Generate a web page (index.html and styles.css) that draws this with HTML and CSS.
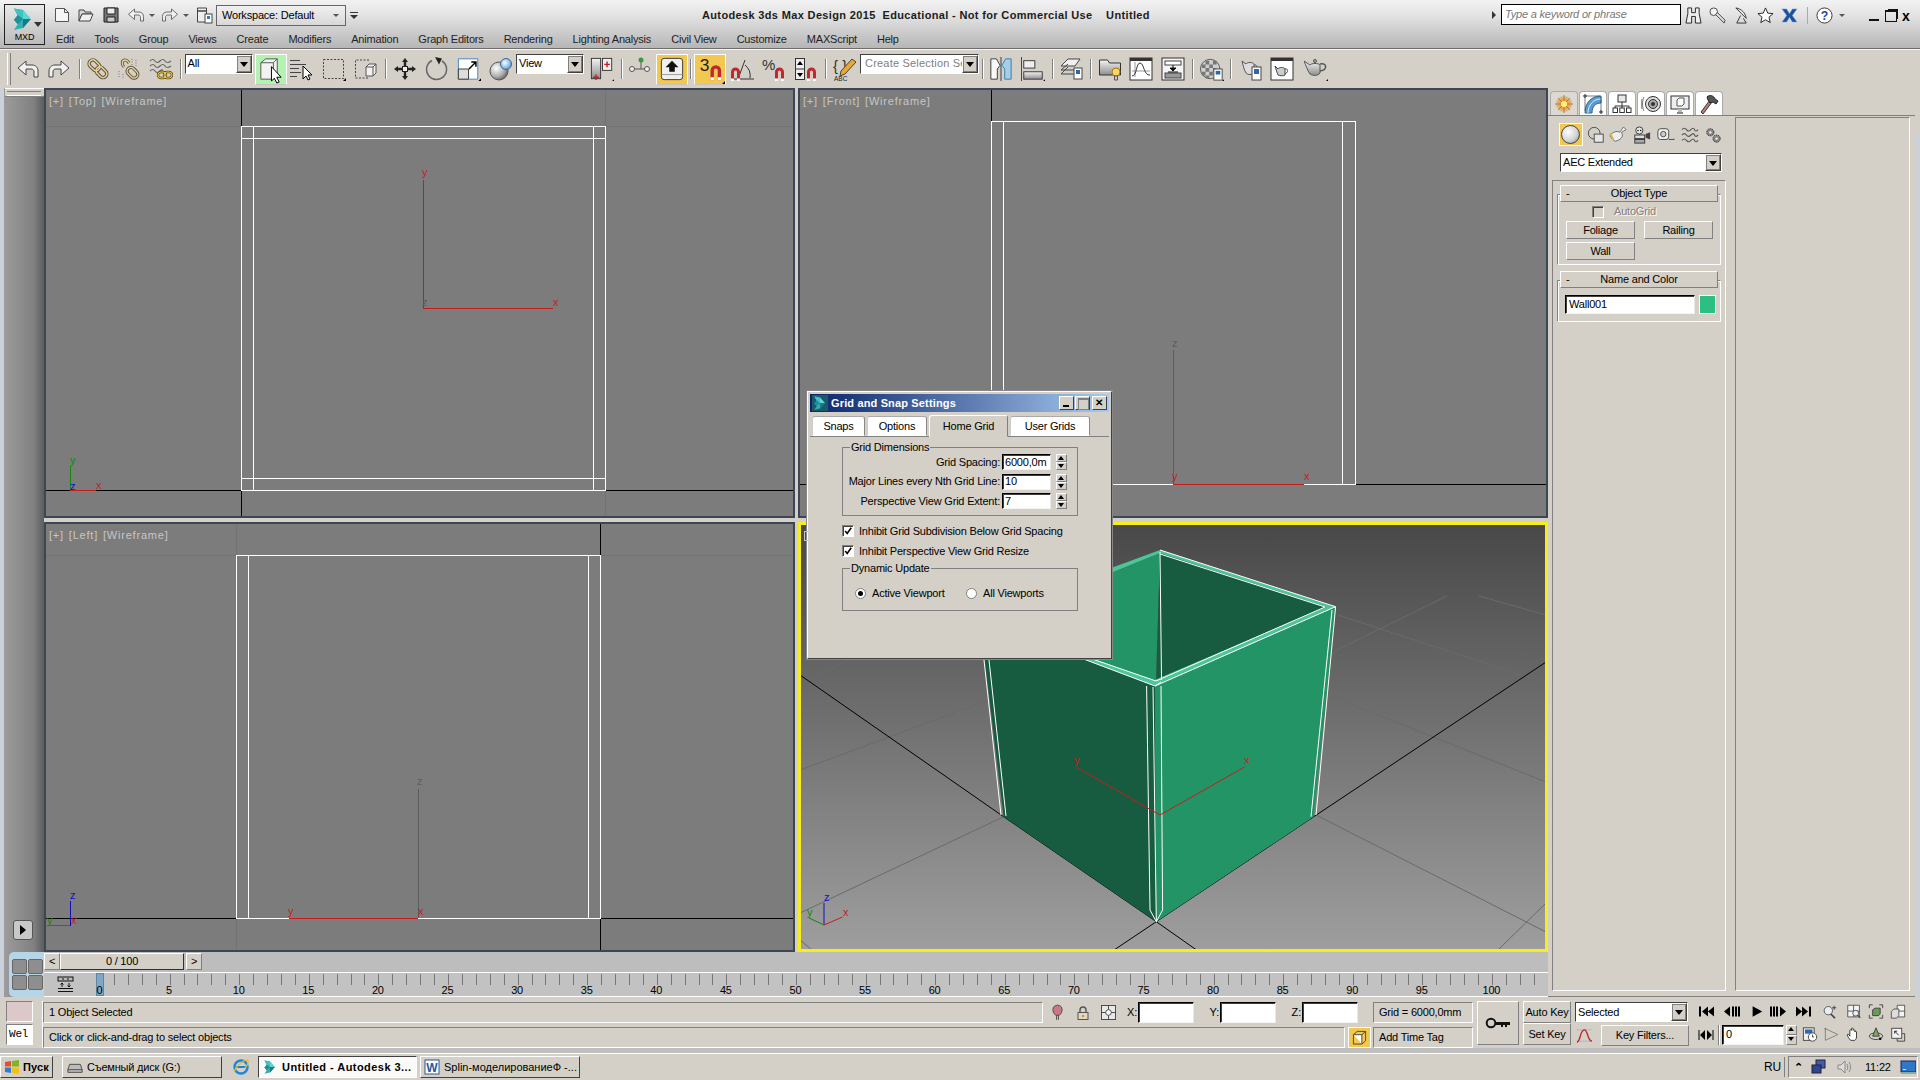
FILE: index.html
```html
<!DOCTYPE html>
<html lang="en">
<head>
    <meta charset="UTF-8">
    <title>Autodesk 3ds Max Design 2015</title>
    <link rel="stylesheet" href="styles.css">
</head>
<body>
<!-- shared icons -->
<svg class="defs" width="0" height="0">
    <defs>
        <linearGradient id="g-grey" x1="0" y1="0" x2="0" y2="1"><stop offset="0" stop-color="#f4f4f4"/><stop offset="1" stop-color="#8d8d8d"/></linearGradient>
        <radialGradient id="g-ball" cx=".35" cy=".35" r=".75"><stop offset="0" stop-color="#fff"/><stop offset=".6" stop-color="#b0b0b0"/><stop offset="1" stop-color="#555"/></radialGradient>
        <radialGradient id="g-blue" cx=".4" cy=".4" r=".7"><stop offset="0" stop-color="#fff"/><stop offset="1" stop-color="#4d8fd0"/></radialGradient>
        <radialGradient id="g-sun" cx=".5" cy=".5" r=".5"><stop offset="0" stop-color="#fff6a0"/><stop offset=".5" stop-color="#f0a030"/><stop offset="1" stop-color="#d0c0a8"/></radialGradient>
    </defs>
    <symbol id="i-new" viewBox="0 0 16 16"><path d="M1.500 1.500h9l4 4v9h-13z" fill="#f6f6f6" stroke="#555"/><path d="M10.500 1.500v4h4" fill="none" stroke="#555"/></symbol>
    <symbol id="i-open" viewBox="0 0 16 16"><path d="M1 3h5l1 2h6v2H4L1 14z" fill="#d8d8d8" stroke="#444"/><path d="M4 7h11l-3 7H1z" fill="#f0f0f0" stroke="#444"/></symbol>
    <symbol id="i-save" viewBox="0 0 16 16"><path d="M1 1h14v14H1z" fill="#777" stroke="#222"/><path d="M4 1h8v6H4z" fill="#eee" stroke="#222"/><path d="M4 10h8v5H4z" fill="#ccc" stroke="#222"/></symbol>
    <symbol id="i-undo" viewBox="0 0 24 24"><path d="M2 11l8-7v4h6c4 0 6 3 6 6v6h-4v-5c0-2-1-3-3-3h-5v6z" fill="#f0f0f0" stroke="#444"/></symbol>
    <symbol id="i-redo" viewBox="0 0 24 24"><path d="M22 11l-8-7v4H8c-4 0-6 3-6 6v6h4v-5c0-2 1-3 3-3h5v6z" fill="#f0f0f0" stroke="#444"/></symbol>
    <symbol id="i-project" viewBox="0 0 18 18"><path d="M1.500 2h9v3h-9zM1.500 5h9v11h-9z" fill="#eee" stroke="#444"/><rect x="9" y="8" width="7" height="9" fill="#fff" stroke="#444"/><rect x="11" y="10" width="3" height="3" fill="#3f78b8"/></symbol>
    <symbol id="i-link" viewBox="0 0 24 24"><g fill="none"><g stroke="#5a4f38" stroke-width="3.400"><rect x="2.500" y="4.500" width="12" height="7.500" rx="3.700" transform="rotate(45 8.500 8.200)"/><rect x="9.500" y="11.500" width="12" height="7.500" rx="3.700" transform="rotate(45 15.500 15.200)"/></g><g stroke="#e8d49a" stroke-width="1.600"><rect x="2.500" y="4.500" width="12" height="7.500" rx="3.700" transform="rotate(45 8.500 8.200)"/><rect x="9.500" y="11.500" width="12" height="7.500" rx="3.700" transform="rotate(45 15.500 15.200)"/></g></g></symbol>
    <symbol id="i-unlink" viewBox="0 0 24 24"><g fill="none"><path d="M7 10C4 7 5 3 8 3s3 2 4 3" stroke="#5a4f38" stroke-width="3"/><path d="M7 10C4 7 5 3 8 3s3 2 4 3" stroke="#e8d49a" stroke-width="1.300"/><rect x="9.500" y="12" width="12" height="7.500" rx="3.700" transform="rotate(45 15.500 15.700)" stroke="#5a4f38" stroke-width="3.200"/><rect x="9.500" y="12" width="12" height="7.500" rx="3.700" transform="rotate(45 15.500 15.700)" stroke="#e8d49a" stroke-width="1.400"/><path d="M15 2v7M19 3v7M2 14v7M6 17v5" stroke="#777" stroke-dasharray="1 1.500"/></g></symbol>
    <symbol id="i-bind" viewBox="0 0 24 24"><path d="M1 4q3-3 5 0t5 0 5 0 6 0M1 9q3-3 5 0t5 0 5 0 6 0M1 14q3-3 5 0t5 0 2 0" fill="none" stroke="#666" stroke-width="1.200"/><g fill="none"><rect x="9" y="15" width="8" height="6" rx="3" stroke="#655010" stroke-width="2.400"/><rect x="15" y="15" width="8" height="6" rx="3" stroke="#655010" stroke-width="2.400"/><rect x="9" y="15" width="8" height="6" rx="3" stroke="#e8c850"/><rect x="15" y="15" width="8" height="6" rx="3" stroke="#e8c850"/></g></symbol>
    <symbol id="i-select" viewBox="0 0 30 30"><path d="M5 8l5-4h12v17l-4 4H5z" fill="#f2f2f2" stroke="#555"/><path d="M5 8h13v17M18 8l4-4" fill="none" stroke="#555"/><path d="M16 12v15l3-3 2.500 5 2.500-1-2.500-5h4.500z" fill="#fff" stroke="#000"/></symbol>
    <symbol id="i-selname" viewBox="0 0 24 24"><path d="M0 3.500h10M0 7.500h16M0 11.500h9M0 15.500h11M0 19.500h7" stroke="#444" fill="none"/><path d="M13 9v13l3-3 2 4 2-1-2-4h4z" fill="#fff" stroke="#000"/></symbol>
    <symbol id="i-rect" viewBox="0 0 24 24"><rect x="1.500" y="2.500" width="20" height="19" fill="none" stroke="#444" stroke-dasharray="2 1.500"/><path d="M24 24h-3l3-3z"/></symbol>
    <symbol id="i-window" viewBox="0 0 24 24"><path d="M15 3H1.500v18H15" fill="none" stroke="#444" stroke-dasharray="2 1.500"/><path d="M12 10l3-3h7v9l-3 3h-7z" fill="#f2f2f2" stroke="#555"/><path d="M12 10h7v9M19 10l3-3" fill="none" stroke="#555"/></symbol>
    <symbol id="i-move" viewBox="0 0 24 24"><path d="M12 1l3 4H13.200v4h-2.400V5H9zM12 23l3-4H13.200v-4h-2.400v4H9zM1 12l4 3V13.200h4v-2.400H5V9zM23 12l-4 3V13.200h-4v-2.400h4V9z" fill="#222"/><rect x="9.500" y="9.500" width="5" height="5" fill="#eee" stroke="#222"/></symbol>
    <symbol id="i-rotate" viewBox="0 0 24 24"><path d="M8 3.500A10 10 0 1 0 18 4" fill="none" stroke="#666" stroke-width="1.500"/><path d="M11 0l7 1.500-3 6z" fill="#222"/></symbol>
    <symbol id="i-scale" viewBox="0 0 26 26"><path d="M1.500 2h21v22h-21z" fill="#fff" stroke="#3f80bd"/><path d="M1.500 13h11v11h-11z" fill="#ddd" stroke="#333"/><path d="M13 13l7-7M15.500 5.500h5v5" fill="none" stroke="#000" stroke-width="1.600"/><path d="M26 26h-3l3-3z"/></symbol>
    <symbol id="i-place" viewBox="0 0 24 24"><circle cx="10" cy="14" r="9" fill="url(#g-ball)" stroke="#555"/><circle cx="17" cy="7" r="5.500" fill="url(#g-blue)" stroke="#2f6aa8"/></symbol>
    <symbol id="i-pivot" viewBox="0 0 26 26"><rect x="1.500" y="1.500" width="10" height="22" fill="url(#g-grey)" stroke="#333"/><rect x="13.500" y="1.500" width="10" height="13" fill="#eee" stroke="#333"/><path d="M6.500 19v6M3.500 22h6M18.500 5v6M15.500 8h6" stroke="#d01818" stroke-width="1.500"/><path d="M26 26h-2l2-2z"/></symbol>
    <symbol id="i-manip" viewBox="0 0 24 24"><path d="M13 3v9M6 12h11" stroke="#555" fill="none"/><circle cx="13" cy="3" r="2.500" fill="#3b9a3b"/><circle cx="4" cy="12" r="2.500" fill="#eee" stroke="#555"/><circle cx="19" cy="12" r="2.500" fill="#eee" stroke="#555"/></symbol>
    <symbol id="i-kbd" viewBox="0 0 26 26"><rect x="1.500" y="1.500" width="23" height="23" rx="3" fill="#f0f0f0" stroke="#333"/><path d="M1.500 19h23" stroke="#999"/><path d="M13 4l7 7h-4v5h-6v-5H6z" fill="#111"/></symbol>
    <symbol id="i-angle" viewBox="0 0 24 24"><path d="M4 22h20M8 22L15 3M15 8a14 14 0 0 1 5 13" fill="none" stroke="#333"/><path d="M1 24V15a4.500 4.500 0 0 1 9 0v9H7v-9a1.500 1.500 0 0 0-3 0v9z" fill="#c1272d"/><path d="M1 21.500h3V24H1zM7 21.500h3V24H7z" fill="#fff"/></symbol>
    <symbol id="i-spin" viewBox="0 0 24 24"><rect x="1.500" y="1.500" width="9" height="21" fill="#eee" stroke="#333"/><path d="M1.500 12h9" stroke="#333"/><path d="M6 4l3 4H3zM6 20l3-4H3z"/><path d="M13 24V15a4.500 4.500 0 0 1 9 0v9h-3v-9a1.500 1.500 0 0 0-3 0v9z" fill="#c1272d"/><path d="M13 21.500h3V24h-3zM19 21.500h3V24h-3z" fill="#fff"/></symbol>
    <symbol id="i-mirror" viewBox="0 0 26 26"><path d="M2 2h6l4 7-3 4v11H2z" fill="#fafafa" stroke="#333"/><path d="M13 0v26" stroke="#333"/><path d="M24 2h-6l-4 7 3 4v11h7z" fill="#a8cce4" stroke="#2e7cb0"/></symbol>
    <symbol id="i-align" viewBox="0 0 26 26"><path d="M.5 0v26" stroke="#333"/><rect x="3" y="4" width="12" height="8" fill="#eee" stroke="#333"/><rect x="3" y="16" width="20" height="8" fill="url(#g-grey)" stroke="#333"/><path d="M26 26h-2l2-2z"/></symbol>
    <symbol id="i-layers" viewBox="0 0 24 24"><path d="M1 9l7-7h12l-5 7zM1 13l7-6M1 17l7-7" fill="#f0f0f0" stroke="#444"/><path d="M1 13h14M1 17h14" stroke="#444"/><rect x="14" y="11" width="8" height="11" fill="#fff" stroke="#444"/><rect x="16" y="13" width="4" height="4" fill="#2f68a8"/></symbol>
    <symbol id="i-explorer" viewBox="0 0 24 24"><path d="M1.500 3h8l2 3h11v12H1.500z" fill="url(#g-grey)" stroke="#333"/><circle cx="18" cy="15" r="4" fill="#f8d860" stroke="#a07818"/><path d="M16.500 19h3v4h-3z" fill="#ccc" stroke="#555"/></symbol>
    <symbol id="i-curve" viewBox="0 0 24 24"><rect x="1" y="1" width="22" height="22" fill="#fff" stroke="#333"/><path d="M1 1h22v3H1z" fill="#333"/><path d="M6 5v15M3 14h18" stroke="#999"/><path d="M3 19c5 0 4-13 8-13s4 13 10 12" fill="none" stroke="#333"/></symbol>
    <symbol id="i-sched" viewBox="0 0 24 24"><rect x="1" y="1" width="22" height="22" fill="#f4f4f4" stroke="#333"/><rect x="4" y="4" width="16" height="4" fill="#fff" stroke="#444"/><rect x="4" y="16" width="16" height="5" fill="#999" stroke="#444"/><path d="M12 8v5M9 11h6l-3 3zM7 15h10" stroke="#111"/></symbol>
    <symbol id="i-mat" viewBox="0 0 26 26"><circle cx="11" cy="13" r="10.500" fill="#cfcfcf" stroke="#555"/><path d="M6 4h4v4H6zM14 4h4v4h-4zM2 8h4v4H2zM10 8h4v4h-4zM6 12h4v4H6zM14 12h4v4h-4zM2 16h4v4H2zM10 16h4v4h-4zM6 20h4v3H6z" fill="#777"/><rect x="15" y="13" width="9" height="12" fill="#fff" stroke="#444"/><rect x="17" y="15" width="5" height="4" fill="#2f68a8"/><path d="M26 26h-2l2-2z"/></symbol>
    <symbol id="i-rsetup" viewBox="0 0 24 24"><path d="M4 4l4 3c1-2 7-2 8 0v9c-2 2-6 2-8 0C6 13 5 8 4 4z" fill="#ddd" stroke="#555"/><path d="M16 8c3-1 4 3 0 5" fill="none" stroke="#555"/><rect x="14" y="10" width="9" height="13" fill="#fff" stroke="#444"/><rect x="16" y="12" width="5" height="5" fill="#2f68a8"/></symbol>
    <symbol id="i-frame" viewBox="0 0 24 24"><rect x="1" y="1" width="22" height="22" fill="#fff" stroke="#333"/><path d="M1 1h22v3H1z" fill="#333"/><path d="M5 9l3 3c1-2 6-2 7 0v6c-1 1-5 1-7 0-1-2-2-6-3-9z" fill="#ccc" stroke="#444"/><path d="M15 12c3-1 4 3 0 5" fill="none" stroke="#444"/></symbol>
    <symbol id="i-teapot" viewBox="0 0 24 24"><path d="M0 4l6 4c1-2 9-2 10 0v8c-2 3-7 3-10 1C3 13 2 8 0 4z" fill="url(#g-grey)" stroke="#555"/><path d="M16 7c7-2 8 6 0 7" fill="none" stroke="#555" stroke-width="1.500"/><circle cx="11" cy="4" r="1.500" fill="#aaa" stroke="#555"/><path d="M24 24h-2l2-2z"/></symbol>
    <symbol id="i-bino" viewBox="0 0 18 18"><path d="M3 1h4v5h4V1h4v6l2 10h-6V10H7v7H1l2-10z" fill="#eee" stroke="#222"/></symbol>
    <symbol id="i-key" viewBox="0 0 18 18"><circle cx="5" cy="5" r="4" fill="#f4f4f4" stroke="#444"/><path d="M7 8l9 9 1-3-8-8z" fill="#ddd" stroke="#444"/></symbol>
    <symbol id="i-dish" viewBox="0 0 18 18"><path d="M3 1c6 1 10 5 11 11z" fill="#eee" stroke="#333"/><path d="M8 9l-4 8h10l-3-5" fill="none" stroke="#333"/></symbol>
    <symbol id="i-star" viewBox="0 0 18 18"><path d="M9 1l2.400 5.500 5.600.5-4.300 3.800 1.300 5.700L9 13.500l-5 3 1.300-5.700L1 7l5.600-.5z" fill="#fff" stroke="#222"/></symbol>
    <symbol id="i-ax" viewBox="0 0 18 18"><path d="M1 2h5l3 5 3-5h5l-5 7 5 7h-5l-3-5-3 5H1l5-7z" fill="#1c4f9c" stroke="#8fb0dc" stroke-width=".6"/></symbol>
    <symbol id="i-create" viewBox="0 0 20 20"><circle cx="10" cy="10" r="8" fill="url(#g-sun)"/><path d="M10 1v18M1 10h18M4 4l12 12M16 4L4 16" stroke="#a86a3a" stroke-width=".8"/><circle cx="10" cy="10" r="3" fill="#fff080"/></symbol>
    <symbol id="i-modify" viewBox="0 0 20 20"><path d="M2 19C2 9 8 2 18 2v7C12 9 9 13 9 19z" fill="#5a9bd4" stroke="#2a6aa0"/><path d="M5 19C5 11 10 5 18 5" fill="none" stroke="#d8ecff"/><path d="M1 1h2v2H1zM17 17h2v2h-2z" fill="#fff" stroke="#222"/><path d="M2 3v14M3 2h14M18 3v14" stroke="#444" fill="none" stroke-width=".7"/></symbol>
    <symbol id="i-hier" viewBox="0 0 20 20"><rect x="6" y="1" width="8" height="7" fill="#e8e8e8" stroke="#333"/><path d="M10 8v4M3 12h14M3 12v2M10 12v2M17 12v2" stroke="#333" fill="none"/><rect x="1" y="14" width="4.500" height="4.500" fill="#fff" stroke="#333"/><rect x="7.800" y="14" width="4.500" height="4.500" fill="#fff" stroke="#333"/><rect x="14.500" y="14" width="4.500" height="4.500" fill="#fff" stroke="#333"/></symbol>
    <symbol id="i-motion" viewBox="0 0 20 20"><circle cx="12" cy="10" r="7.500" fill="#ddd" stroke="#333"/><circle cx="12" cy="10" r="4.500" fill="#aaa" stroke="#333"/><circle cx="12" cy="10" r="2" fill="#333"/><path d="M3 3c-2 4-2 10 0 14M1 5c-1 3-1 7 0 10" fill="none" stroke="#777"/></symbol>
    <symbol id="i-display" viewBox="0 0 20 20"><rect x="1" y="2" width="18" height="13" fill="#eee" stroke="#333"/><path d="M7 11V6l2-2h5v6l-2 2H7z" fill="#fff" stroke="#555"/><path d="M7 18h6v2H7z" fill="#888"/><path d="M8 15h4v3H8z" fill="#bbb"/></symbol>
    <symbol id="i-util" viewBox="0 0 20 20"><path d="M2 18L11 6l2 2L4 20z" fill="#b8807a" stroke="#333"/><path d="M8 3c3-3 7-1 8 2l3 2-2 3-3-2-3 1-2-3z" fill="#555" stroke="#222"/></symbol>
    <symbol id="i-shapes" viewBox="0 0 20 20"><circle cx="8" cy="8" r="6.500" fill="none" stroke="#444"/><rect x="8" y="9" width="10" height="9" fill="#e6e6e6" stroke="#444"/></symbol>
    <symbol id="i-lights" viewBox="0 0 20 20"><path d="M16 1l3 3-5 3 1 4c-1 3-4 5-8 6-2-1-4-3-6-6 2-3 5-5 8-5l3 1z" fill="#eee" stroke="#666"/><path d="M5 15L1 8" stroke="#dcb84c" stroke-width="2"/></symbol>
    <symbol id="i-cams" viewBox="0 0 20 20"><circle cx="7" cy="5" r="4" fill="#e6e6e6" stroke="#333"/><circle cx="5.500" cy="5" r=".8"/><circle cx="8.500" cy="5" r=".8"/><rect x="2" y="10" width="11" height="4" fill="#ddd" stroke="#333"/><rect x="2" y="15" width="11" height="4" fill="#aaa" stroke="#333"/><path d="M14 9l5-2v8l-5-2z" fill="#444"/></symbol>
    <symbol id="i-helpers" viewBox="0 0 20 20"><rect x="1" y="3" width="12" height="12" rx="3" fill="#eee" stroke="#444"/><circle cx="7" cy="9" r="3" fill="#ccc" stroke="#444"/><path d="M13 15h6v-1" fill="none" stroke="#444"/></symbol>
    <symbol id="i-warps" viewBox="0 0 20 20"><path d="M1 4q3-3 5 0t5 0 4 0 4 0M1 10q3-3 5 0t5 0 4 0 4 0M1 16q3-3 5 0t5 0 4 0 4 0" fill="none" stroke="#555" stroke-width="1.200"/></symbol>
    <symbol id="i-systems" viewBox="0 0 20 20"><g fill="#888" stroke="#222"><circle cx="7" cy="7" r="4" stroke-dasharray="1.500 1"/><circle cx="14" cy="14" r="4" stroke-dasharray="1.500 1"/></g><circle cx="7" cy="7" r="1.300" fill="#eee"/><circle cx="14" cy="14" r="1.300" fill="#eee"/></symbol>
    <symbol id="i-start" viewBox="0 0 16 16"><path d="M1 3l6-1v5.500H1z" fill="#e2502c"/><path d="M8 2l7-1v6.500H8z" fill="#7db428"/><path d="M1 8.500h6V14l-6-1z" fill="#2e7cd6"/><path d="M8 8.500h7V15l-7-1z" fill="#f5c013"/></symbol>
    <symbol id="i-drive" viewBox="0 0 18 18"><path d="M3 6h12l2 6v3H1v-3z" fill="#bbb" stroke="#444"/><path d="M1 12h16" stroke="#444"/></symbol>
    <symbol id="i-ie" viewBox="0 0 18 18"><circle cx="9" cy="9" r="6.500" fill="none" stroke="#1e88d8" stroke-width="2.500"/><path d="M4 9h10" stroke="#1e88d8" stroke-width="2"/><path d="M2 14C5 6 12 2 16 2c1 2-1 6-3 8" fill="none" stroke="#f0b828" stroke-width="1.200"/></symbol>
    <symbol id="i-max" viewBox="0 0 40 40"><path d="M6 4l14 2 12 14-12 14-14 3 6-9-6-7 6-6z" fill="#2fb0b4"/><path d="M20 6l12 14H20z" fill="#5fd6d2"/><path d="M20 20h12L20 34z" fill="#187a84"/><path d="M6 4l14 2v14l-8-6z" fill="#3cc4c4"/><path d="M12 14l8 6-8 8-6-7z" fill="#1f9098"/></symbol>
</svg>

<header class="titlebar">
    <div class="title-row">
        <div class="app-btn">
            <svg class="app-logo"><use href="#i-max"/></svg>
            <span class="app-arrow"></span>
            <span class="app-name">MXD</span>
        </div>
        <svg class="qa qa-new"><use href="#i-new"/></svg>
        <svg class="qa qa-open"><use href="#i-open"/></svg>
        <svg class="qa qa-save"><use href="#i-save"/></svg>
        <svg class="qa qa-undo"><use href="#i-undo"/></svg>
        <span class="tiny-arrow"></span>
        <svg class="qa qa-redo"><use href="#i-redo"/></svg>
        <span class="tiny-arrow"></span>
        <svg class="qa qa-proj"><use href="#i-project"/></svg>
        <div class="workspace">Workspace: Default<span class="tiny-arrow"></span></div>
        <span class="qa-more"></span>
        <div class="app-title">Autodesk 3ds Max Design 2015&nbsp; Educational - Not for Commercial Use &nbsp; &nbsp;Untitled</div>
        <span class="search-tri"></span>
        <div class="search">Type a keyword or phrase</div>
        <div class="info-icons">
            <svg><use href="#i-bino"/></svg>
            <svg><use href="#i-key"/></svg>
            <svg><use href="#i-dish"/></svg>
            <svg><use href="#i-star"/></svg>
            <svg><use href="#i-ax"/></svg>
        </div>
        <svg class="help-icon" viewBox="0 0 18 18"><circle cx="9" cy="9" r="8" fill="#fff" stroke="#333"/><text x="9" y="13.500" text-anchor="middle" class="svg-t" font-size="13" font-weight="700" fill="#2044b0">?</text></svg>
        <span class="tiny-arrow help-arrow"></span>
        <div class="win-btns">
            <span class="w-min"></span>
            <span class="w-max"></span>
            <span class="w-close">x</span>
        </div>
    </div>
    <nav class="menu">
        <span>Edit</span><span>Tools</span><span>Group</span><span>Views</span><span>Create</span><span>Modifiers</span><span>Animation</span><span>Graph Editors</span><span>Rendering</span><span>Lighting Analysis</span><span>Civil View</span><span>Customize</span><span>MAXScript</span><span>Help</span>
    </nav>
</header>

<div class="toolbar">
    <div class="tool"><span class="grip"></span></div>
    <div class="tool"><svg><use href="#i-undo"/></svg></div>
    <div class="tool"><svg><use href="#i-redo"/></svg></div>
    <div class="tool"><span class="sep"></span></div>
    <div class="tool"><svg><use href="#i-link"/></svg></div>
    <div class="tool"><svg><use href="#i-unlink"/></svg></div>
    <div class="tool"><svg><use href="#i-bind"/></svg></div>
    <div class="tool"><span class="sep"></span></div>
    <div class="tool tool-left"><div class="combo combo-tb"><span class="combo-val">All</span><span class="combo-btn"></span></div></div>
    <div class="tool tool-on-green"><svg class="big"><use href="#i-select"/></svg></div>
    <div class="tool"><svg><use href="#i-selname"/></svg></div>
    <div class="tool"><svg><use href="#i-rect"/></svg></div>
    <div class="tool"><svg><use href="#i-window"/></svg></div>
    <div class="tool"><span class="sep"></span></div>
    <div class="tool"><svg><use href="#i-move"/></svg></div>
    <div class="tool"><svg><use href="#i-rotate"/></svg></div>
    <div class="tool"><svg><use href="#i-scale"/></svg></div>
    <div class="tool"><svg><use href="#i-place"/></svg></div>
    <div class="tool tool-left"><div class="combo combo-tb"><span class="combo-val">View</span><span class="combo-btn"></span></div></div>
    <div class="tool"><svg><use href="#i-pivot"/></svg></div>
    <div class="tool"><span class="sep"></span></div>
    <div class="tool"><svg><use href="#i-manip"/></svg></div>
    <div class="tool tool-on"><svg><use href="#i-kbd"/></svg></div>
    <div class="tool"><span class="sep"></span></div>
    <div class="tool tool-on"><svg class="big" viewBox="0 0 30 30"><text x="4" y="17" class="svg-t" font-size="18" fill="#222">3</text><path d="M15 26V16a5.500 5.500 0 0 1 11 0v10h-3.500V16a2 2 0 0 0-4 0v10z" fill="#c1272d"/><path d="M15 23h3.500v3H15zM22.500 23H26v3h-3.500z" fill="#fff"/><path d="M30 30h-3l3-3z"/></svg></div>
    <div class="tool"><svg><use href="#i-angle"/></svg></div>
    <div class="tool"><svg viewBox="0 0 24 24"><text x="0" y="13" class="svg-t" font-size="15" fill="#333">%</text><path d="M13 24V15a4.500 4.500 0 0 1 9 0v9h-3v-9a1.500 1.500 0 0 0-3 0v9z" fill="#c1272d"/><path d="M13 21.500h3V24h-3zM19 21.500h3V24h-3z" fill="#fff"/></svg></div>
    <div class="tool"><svg><use href="#i-spin"/></svg></div>
    <div class="tool"><span class="sep"></span></div>
    <div class="tool"><svg viewBox="0 0 24 24"><text x="0" y="14" class="svg-t" font-size="15" fill="#333">{ }</text><path d="M8 14L19 2l4 3-11 12-5 2z" fill="#e8a838" stroke="#444"/><text x="1" y="24" class="svg-t" font-size="6.500" fill="#222" letter-spacing=".6">ABC</text></svg></div>
    <div class="tool tool-left"><div class="combo combo-sel"><span class="combo-val combo-hint">Create Selection Se</span><span class="combo-btn"></span></div></div>
    <div class="tool"><span class="sep"></span></div>
    <div class="tool"><svg><use href="#i-mirror"/></svg></div>
    <div class="tool"><svg><use href="#i-align"/></svg></div>
    <div class="tool"><span class="sep"></span></div>
    <div class="tool"><svg><use href="#i-layers"/></svg></div>
    <div class="tool"><span class="sep"></span></div>
    <div class="tool"><svg><use href="#i-explorer"/></svg></div>
    <div class="tool"><svg><use href="#i-curve"/></svg></div>
    <div class="tool"><svg><use href="#i-sched"/></svg></div>
    <div class="tool"><span class="sep"></span></div>
    <div class="tool"><svg><use href="#i-mat"/></svg></div>
    <div class="tool"><span class="sep"></span></div>
    <div class="tool"><svg><use href="#i-rsetup"/></svg></div>
    <div class="tool"><svg><use href="#i-frame"/></svg></div>
    <div class="tool"><svg><use href="#i-teapot"/></svg></div>
</div>

<main class="workspace-area">
    <aside class="left-strip">
        <div class="strip-grip"></div>
        <div class="strip-play"><span></span></div>
        <div class="layout-btn"><i></i><i></i><i></i><i></i></div>
    </aside>

    <section class="center">
        <div class="viewports">
            <div class="vp">
                <span class="vp-label">[+] [Top] [Wireframe]</span>
                <svg class="vp-svg" width="747" height="426" viewBox="46 90 747 426">
                    <path class="minor" d="M46 126.500h747M605.500 90v426"/>
                    <path class="major" d="M241.500 90v426M46 490.500h747"/>
                    <path class="wall" d="M241.500 126.500h364v364h-364zM253.500 126.500v364M593.500 126.500v364M241.500 138.500h364M241.500 478.500h364"/>
                    <path class="red" d="M423.500 180v128.500H553"/>
                    <text class="ax-red" x="422" y="176">y</text><text class="ax-red" x="553" y="306">x</text><text class="ax-grey" x="422" y="306">z</text>
                    <path class="green-l" d="M70.500 466v24"/><path class="red" d="M70 490.500h26"/>
                    <text class="ax-green" x="70" y="464">y</text><text class="ax-red" x="96" y="489">x</text><text class="ax-blue" x="70" y="490">z</text>
                </svg>
            </div>
            <div class="vp">
                <span class="vp-label">[+] [Front] [Wireframe]</span>
                <svg class="vp-svg" width="746" height="426" viewBox="800 90 746 426">
                    <path class="major" d="M991.500 90v426M800 484.500h746"/>
                    <path class="wall" d="M991.500 121.500h364v363h-364zM1003.500 121.500v363M1342.500 121.500v363"/>
                    <path class="red" d="M1173 484.500h131"/>
                    <path class="grey-l" d="M1173.500 350v134"/>
                    <text class="ax-red" x="1172" y="480">y</text><text class="ax-red" x="1304" y="480">x</text><text class="ax-grey" x="1172" y="347">z</text>
                </svg>
            </div>
            <div class="vp">
                <span class="vp-label">[+] [Left] [Wireframe]</span>
                <svg class="vp-svg" width="747" height="426" viewBox="46 524 747 426">
                    <path class="minor" d="M46 555.500h747M236.500 524v426"/>
                    <path class="major" d="M600.500 524v426M46 918.500h747"/>
                    <path class="wall" d="M236.500 555.500h364v363h-364zM248.500 555.500v363M588.500 555.500v363"/>
                    <path class="red" d="M289 918.500h129"/>
                    <path class="grey-l" d="M418.500 789v129"/>
                    <text class="ax-red" x="288" y="915">y</text><text class="ax-red" x="418" y="915">x</text><text class="ax-grey" x="417" y="785">z</text>
                    <path class="blue-l" d="M70.500 901v25"/><path class="green-l" d="M47 925.500h23"/>
                    <text class="ax-blue" x="70" y="899">z</text><text class="ax-green" x="47" y="924">y</text><text class="ax-red" x="71" y="924">x</text>
                </svg>
            </div>
            <div class="vp vp-active">
                <span class="vp-bracket"></span>
                <svg class="vp-svg" width="744" height="424" viewBox="801 525 744 424">
                    <defs>
                        <linearGradient id="g-persp" x1="0" y1="0" x2="0" y2="1"><stop offset="0" stop-color="#484848"/><stop offset="1" stop-color="#9e9e9e"/></linearGradient>
                    </defs>
                    <rect x="801" y="525" width="744" height="424" fill="url(#g-persp)"/>
                    <path class="minor-p" d="M1316 815L1546 932M1003 817L800 913M1447 596L1333 652M1479 596L1546 615M1338 615L1546 683M1328 695L1546 782M1546 903L1498 950M989 700L800 770M805 680L848 660M800 940L812 950"/>
                    <path class="black-p" d="M800 675L1003.600 816.700L1156.300 921.700L1313.800 816.700L1546.500 661.700M1156.300 921.700L1112.600 951M1156.300 921.700L1198 951"/>
                    <polygon class="face-light" points="1160,553 985,625 1156,682"/>
                    <polygon class="face-dark" points="1160,553 1326,607 1156,682"/>
                    <polygon class="face-dark" points="980,620 1155,686 1156.300,921.700 1003.600,816.700"/>
                    <polygon class="face-light" points="1155,686 1335.600,607 1313.800,816.700 1156.300,921.700"/>
                    <polygon class="face-rim" points="1160,550 1335.600,606.700 1155,686 1150,682 1326,607 1160,553"/>
                    <polygon class="face-rim" points="1160,550 975,618 1155,686 1156,681 990,622 1160,553"/>
                    <path class="wall-p" d="M1160 550L1335.600 606.700L1155 686L975 618M1160 554L1325 607L1156 681L985 622M1160 552L1161.500 680M1146.600 686L1150 910L1156.300 921.700M1153 687L1156.300 921.700M1161 686L1162.600 910L1156.300 921.700M1332 610L1311 816.700M1335.600 607L1316 815M984 660L1001 815M989 660L1006 816M1155 686L1161 682"/>
                    <path class="red" d="M1076 767L1160 815L1244.500 767"/>
                    <text class="ax-red" x="1074" y="764">y</text><text class="ax-red" x="1244" y="764">x</text>
                    <path class="blue-l" d="M824 903v22"/><path class="green-l" d="M809 918L824 925"/><path class="red" d="M824 925L842.600 917"/>
                    <text class="ax-blue" x="824" y="901">z</text><text class="ax-green" x="807" y="916">y</text><text class="ax-red" x="843" y="916">x</text>
                </svg>
            </div>
        </div>
        <div class="time-slider">
            <span class="ts-arrow">&lt;</span>
            <span class="ts-thumb">0 / 100</span>
            <span class="ts-arrow ts-next">&gt;</span>
        </div>
        <div class="track">
            <svg class="track-icon" viewBox="0 0 17 17"><rect x="1" y="1" width="15" height="4" fill="#bbb" stroke="#111"/><path d="M5 3h2M10 3h2" stroke="#111"/><path d="M1 15.500h15M1 12.500h15" stroke="#111"/><path d="M5 11V7M3.500 8.500L5 7l1.500 1.500M12 7v4M10.500 9.500L12 11l1.500-1.500" fill="none" stroke="#111"/></svg>
            <span class="frame-marker"></span>
            <div class="track-labels">
                <span>0</span><span>5</span><span>10</span><span>15</span><span>20</span><span>25</span><span>30</span><span>35</span><span>40</span><span>45</span><span>50</span><span>55</span><span>60</span><span>65</span><span>70</span><span>75</span><span>80</span><span>85</span><span>90</span><span>95</span><span>100</span>
            </div>
        </div>
    </section>

    <aside class="cmd">
        <div class="cmd-tabs">
            <span class="cmd-tab cmd-tab-on"><svg><use href="#i-create"/></svg></span>
            <span class="cmd-tab"><svg><use href="#i-modify"/></svg></span>
            <span class="cmd-tab"><svg><use href="#i-hier"/></svg></span>
            <span class="cmd-tab"><svg><use href="#i-motion"/></svg></span>
            <span class="cmd-tab"><svg><use href="#i-display"/></svg></span>
            <span class="cmd-tab"><svg><use href="#i-util"/></svg></span>
        </div>
        <div class="cmd-body">
            <div class="cmd-main">
                <div class="sub-icons">
                    <span class="sub-on"><i class="sub-ball"></i></span>
                    <span><svg><use href="#i-shapes"/></svg></span>
                    <span><svg><use href="#i-lights"/></svg></span>
                    <span><svg><use href="#i-cams"/></svg></span>
                    <span><svg><use href="#i-helpers"/></svg></span>
                    <span><svg><use href="#i-warps"/></svg></span>
                    <span><svg><use href="#i-systems"/></svg></span>
                </div>
                <div class="combo combo-cat"><span class="combo-val">AEC Extended</span><span class="combo-btn"></span></div>
                <div class="rollouts">
                    <div class="rollout">
                        <div class="roll-head"><span class="roll-minus">-</span>Object Type</div>
                        <div class="roll-body">
                            <div class="autogrid"><span class="check check-off"></span><span class="disabled">AutoGrid</span></div>
                            <div class="btn-grid">
                                <span class="btn">Foliage</span>
                                <span class="btn">Railing</span>
                                <span class="btn">Wall</span>
                            </div>
                        </div>
                    </div>
                    <div class="rollout">
                        <div class="roll-head"><span class="roll-minus">-</span>Name and Color</div>
                        <div class="roll-body name-row">
                            <span class="field name-field">Wall001</span>
                            <span class="swatch"></span>
                        </div>
                    </div>
                </div>
            </div>
            <div class="cmd-extra"></div>
        </div>
    </aside>
</main>

<footer class="status">
    <div class="script-col">
        <span class="script-pink"></span>
        <span class="script-box">Wel</span>
    </div>
    <div class="status-rows">
        <div class="st-row">
            <span class="sunk st-wide">1 Object Selected</span>
            <span class="st-ic st-pin"><svg viewBox="0 0 12 18"><path d="M6 1c3 0 5 2 5 5 0 3-2 5-3 6H4C3 11 1 9 1 6c0-3 2-5 5-5z" fill="#c9788a" stroke="#444"/><path d="M5 12v5M7 12v5" stroke="#444"/></svg></span>
            <span class="st-ic st-lock"><svg viewBox="0 0 12 14"><path d="M3 7V4a3 3 0 0 1 6 0v3" fill="none" stroke="#555" stroke-width="1.400"/><rect x="1" y="6.500" width="10" height="7" fill="#e4d8b8" stroke="#555"/><path d="M6 9v2" stroke="#555"/></svg></span>
            <span class="st-ic st-cross"><svg viewBox="0 0 16 16"><rect x=".5" y=".5" width="15" height="15" fill="#e8e8e8" stroke="#444"/><circle cx="8" cy="8" r="3" fill="#fff" stroke="#444"/><path d="M8 0v5M8 11v5M0 8h5M11 8h5" stroke="#444"/></svg></span>
            <label class="st-lbl st-lbl-x">X:</label><span class="field st-in"></span>
            <label class="st-lbl">Y:</label><span class="field st-in"></span>
            <label class="st-lbl">Z:</label><span class="field st-in"></span>
            <span class="sunk st-grid">Grid = 6000,0mm</span>
        </div>
        <div class="st-row">
            <span class="sunk st-prompt">Click or click-and-drag to select objects</span>
            <span class="st-cube"><svg viewBox="0 0 16 16"><path d="M1.500 5l4-3.500h9v10l-4 3.500h-9z" fill="none" stroke="#444"/><path d="M1.500 5h9v10M10.500 5l4-3.500" fill="#fff" stroke="#444"/></svg></span>
            <span class="sunk st-tag">Add Time Tag</span>
        </div>
    </div>
    <div class="key-btn"><svg viewBox="0 0 26 12"><circle cx="6" cy="6" r="4.300" fill="none" stroke="#111" stroke-width="2"/><path d="M10 5h15v3h-3v2h-2V8h-2v2h-2V8h-6z" fill="#111"/></svg></div>
    <div class="key-col">
        <span class="btn key-txt">Auto Key</span>
        <span class="btn key-txt">Set Key</span>
    </div>
    <div class="sel-col">
        <div class="combo combo-key"><span class="combo-val">Selected</span><span class="combo-btn"></span></div>
        <div class="filter-row">
            <svg class="curve-ic" viewBox="0 0 18 18"><path d="M1 3h16M1 15h16" stroke="#a0a0e0" stroke-dasharray="2 1" fill="none"/><path d="M1 16c4 0 3-13 8-13 4 0 3 12 8 12" fill="none" stroke="#c02020" stroke-width="1.400"/></svg>
            <span class="btn filter-btn">Key Filters...</span>
        </div>
    </div>
    <div class="playback">
        <div class="pb-row">
            <svg viewBox="0 0 16 12"><path d="M1 1h2v10H1zM10 1L4 6l6 5zM16 1l-6 5 6 5z"/></svg>
            <svg viewBox="0 0 16 12"><path d="M6 1L0 6l6 5zM8 1h2v10H8zM11 1h2v10h-2zM14 1h2v10h-2z"/></svg>
            <svg class="pb-play" viewBox="0 0 16 12"><path d="M3 0l11 6-11 6z"/></svg>
            <svg viewBox="0 0 16 12"><path d="M0 1h2v10H0zM3 1h2v10H3zM6 1h2v10H6zM10 1l6 5-6 5z"/></svg>
            <svg viewBox="0 0 16 12"><path d="M15 1h-2v10h2zM0 1l6 5-6 5zM6 1l6 5-6 5z"/></svg>
            <svg viewBox="0 0 18 18"><circle cx="7" cy="8" r="5" fill="#e8eef8" stroke="#444"/><path d="M10 12l5 5" stroke="#444" stroke-width="2"/><path d="M14 2v5M11.500 4.500h5" stroke="#333"/></svg>
            <svg viewBox="0 0 18 18"><path d="M1.500 1.500h14v14h-14zM8.500 1.500v14M1.500 8.500h14" fill="#f4f4f4" stroke="#444"/><circle cx="11" cy="11" r="3.500" fill="#e8eef8" stroke="#444"/><path d="M13.500 13.500l3 3" stroke="#444" stroke-width="1.500"/></svg>
            <svg viewBox="0 0 18 18"><path d="M1 5V1h4M13 1h4v4M1 13v4h4M17 13v4h-4" fill="none" stroke="#333"/><path d="M5 7l3-2h6v7l-2 2H5z" fill="#6d9a56" stroke="#333"/></svg>
            <svg viewBox="0 0 18 18"><path d="M8 1.500h9v14H8zM8 8.500h9" fill="#f4f4f4" stroke="#444"/><path d="M1 9l3-3h6v8l-3 3H1z" fill="#ddd" stroke="#444"/></svg>
        </div>
        <div class="pb-row pb-row2">
            <svg class="pb-keymode" viewBox="0 0 16 12"><path d="M1 1v10M15 1v10" stroke="#000" fill="none"/><path d="M7 1L2 6l5 5zM9 1l5 5-5 5z"/></svg>
            <span class="sep sep-pb"></span>
            <span class="field pb-frame">0</span>
            <span class="spinner"><i></i><i class="down"></i></span>
            <svg class="pb-tc" viewBox="0 0 18 18"><rect x="1" y="1" width="13" height="15" fill="#eee" stroke="#333"/><rect x="3" y="3" width="9" height="5" fill="#2f68a8"/><circle cx="12" cy="12" r="5" fill="#fff" stroke="#333"/><path d="M12 9v3h2" fill="none" stroke="#333"/></svg>
            <svg viewBox="0 0 18 18"><path d="M1 2l15 7-15 7z" fill="none" stroke="#777"/><circle cx="1" cy="2" r="1" fill="#777"/></svg>
            <svg viewBox="0 0 18 18"><path d="M5 16c-2-2-4-5-4-7 1-1 2 0 3 2V4c0-1 2-1 2 0V2c0-1 2-1 2 0v2c0-1 2-1 2 0v2c0-1 2-1 2 0v6c0 2-1 3-2 4z" fill="#fff" stroke="#222"/></svg>
            <svg viewBox="0 0 18 18"><ellipse cx="9" cy="11" rx="8" ry="4" fill="none" stroke="#333"/><path d="M9 1L5 11h8z" fill="#7ea860" stroke="#333"/><circle cx="14" cy="14" r="1.500"/></svg>
            <svg viewBox="0 0 18 18"><rect x="1.500" y="1.500" width="12" height="12" fill="#f4f4f4" stroke="#333"/><path d="M5 5l5 5M5 5h3M5 5v3" stroke="#111" fill="none"/><path d="M14 8h3v9H8v-3" fill="none" stroke="#333"/></svg>
        </div>
    </div>
</footer>
<div class="band"></div>

<div class="taskbar">
    <div class="start"><svg><use href="#i-start"/></svg>Пуск</div>
    <div class="task task-drive"><svg><use href="#i-drive"/></svg>Съемный диск (G:)</div>
    <svg class="ie"><use href="#i-ie"/></svg>
    <div class="task task-on"><svg><use href="#i-max"/></svg>Untitled - Autodesk 3...</div>
    <div class="task task-word"><svg viewBox="0 0 16 16"><rect x="1" y="1" width="14" height="14" fill="#fff" stroke="#2b579a"/><text x="8" y="12.500" text-anchor="middle" class="svg-t" font-size="12" font-weight="700" fill="#2b579a">W</text></svg>Splin-моделированиеФ -...</div>
    <span class="lang">RU</span>
    <div class="tray">
        <span class="tray-chev">&#8963;</span>
        <svg viewBox="0 0 16 16"><rect x="5" y="1" width="9" height="8" fill="#3f5fae" stroke="#223"/><rect x="1" y="6" width="9" height="8" fill="#2d4790" stroke="#223"/></svg>
        <svg viewBox="0 0 16 16"><path d="M2 6h3l4-4v12l-4-4H2z" fill="#ddd" stroke="#888"/><path d="M11 5c1 2 1 4 0 6M13 3c2 3 2 7 0 10" fill="none" stroke="#888"/></svg>
        <span class="clock">11:22</span>
        <svg viewBox="0 0 16 16"><rect x="1" y="2" width="15" height="11" fill="#2f78c8" stroke="#225"/><path d="M1 13h15v2H1z" fill="#8aa"/><path d="M3 10h3v1H3z" fill="#ff0"/></svg>
    </div>
</div>

<!-- floating dialog -->
<div class="dialog">
    <div class="dlg-title">
        <svg><use href="#i-max"/></svg>
        <span class="dlg-name">Grid and Snap Settings</span>
        <span class="dlg-btn dlg-min"></span>
        <span class="dlg-btn dlg-max"></span>
        <span class="dlg-btn dlg-close">&#10005;</span>
    </div>
    <div class="dlg-tabs">
        <span class="dlg-tab dlg-snaps">Snaps</span>
        <span class="dlg-tab dlg-opts">Options</span>
        <span class="dlg-tab dlg-tab-on">Home Grid</span>
        <span class="dlg-tab dlg-user">User Grids</span>
    </div>
    <div class="dlg-body">
        <div class="group group-grid">
            <span class="legend">Grid Dimensions</span>
            <div class="grid-row"><span>Grid Spacing:</span><span class="field dlg-in">6000,0m</span><span class="spinner"><i></i><i class="down"></i></span></div>
            <div class="grid-row"><span>Major Lines every Nth Grid Line:</span><span class="field dlg-in">10</span><span class="spinner"><i></i><i class="down"></i></span></div>
            <div class="grid-row"><span>Perspective View Grid Extent:</span><span class="field dlg-in">7</span><span class="spinner"><i></i><i class="down"></i></span></div>
        </div>
        <div class="chk-row"><span class="check"><svg viewBox="0 0 10 10"><path d="M1.500 5l2.500 3 5-7" fill="none" stroke="#000" stroke-width="2"/></svg></span>Inhibit Grid Subdivision Below Grid Spacing</div>
        <div class="chk-row"><span class="check"><svg viewBox="0 0 10 10"><path d="M1.500 5l2.500 3 5-7" fill="none" stroke="#000" stroke-width="2"/></svg></span>Inhibit Perspective View Grid Resize</div>
        <div class="group group-dyn">
            <span class="legend">Dynamic Update</span>
            <div class="radio-row">
                <span class="radio radio-on"></span><span class="radio-txt">Active Viewport</span>
                <span class="radio"></span><span class="radio-txt">All Viewports</span>
            </div>
        </div>
    </div>
</div>
</body>
</html>
```
FILE: styles.css
```css
* {
    margin: 0;
    padding: 0;
    box-sizing: border-box;
}

body {
    width: 1920px;
    height: 1080px;
    overflow: hidden;
    position: relative;
    background: #d4d0c8;
    color: #000;
    font-family: 'Liberation Sans', Arial, sans-serif;
    font-size: 11px;
    line-height: 1;
    letter-spacing: -.2px;
}

.defs {
    position: absolute;
}

.svg-t {
    font-family: 'Liberation Sans', Arial, sans-serif;
    letter-spacing: 0;
}

svg {
    display: block;
}

/* shared widgets */
.sunk {
    border: 1px solid;
    border-color: #808080 #fff #fff #808080;
    display: flex;
    align-items: center;
}

.btn {
    display: flex;
    align-items: center;
    justify-content: center;
    border: 1px solid;
    border-color: #fff #808080 #808080 #fff;
    background: #d4d0c8;
}

.field {
    display: flex;
    align-items: center;
    background: #fff;
    border: 1px solid;
    border-color: #000 #e8e8e8 #f4f4f4 #000;
    box-shadow: inset 1px 1px 0 #404040;
    padding-left: 3px;
    white-space: nowrap;
    overflow: hidden;
}

.combo {
    display: flex;
    background: #fff;
    border: 1px solid;
    border-color: #404040 #fff #fff #404040;
}

.combo-val {
    flex: 1;
    display: flex;
    align-items: center;
    padding-left: 2px;
    white-space: nowrap;
    overflow: hidden;
}

.combo-btn {
    width: 16px;
    position: relative;
    background: #d4d0c8;
    border: 1px solid;
    border-color: #fff #404040 #404040 #fff;
    outline: 1px solid #808080;
    outline-offset: -2px;
}

.combo-btn::after {
    content: '';
    position: absolute;
    left: 3px;
    top: 50%;
    margin-top: -2px;
    border: 4px solid transparent;
    border-top: 5px solid #000;
    border-bottom: 0;
}

.spinner {
    display: flex;
    flex-direction: column;
    width: 11px;
    gap: 0;
}

.spinner i {
    flex: 1;
    position: relative;
    background: #d4d0c8;
    border: 1px solid;
    border-color: #fff #808080 #808080 #fff;
}

.spinner i::after {
    content: '';
    position: absolute;
    left: 1px;
    top: 1px;
    border: 3px solid transparent;
    border-top: 0;
    border-bottom: 4px solid #000;
}

.spinner i.down::after {
    border-bottom: 0;
    border-top: 4px solid #000;
}

.tiny-arrow {
    width: 0;
    height: 0;
    border: 3px solid transparent;
    border-top: 3px solid #555;
    border-bottom: 0;
}

.check {
    width: 12px;
    height: 12px;
    flex-shrink: 0;
    background: #fff;
    border: 1px solid;
    border-color: #808080 #fff #fff #808080;
    box-shadow: inset 1px 1px 0 #404040;
    padding: 1px;
}

/* title bar */
.titlebar {
    height: 49px;
    background: linear-gradient(#f2f2f2, #e4e4e4 30%, #b6b6b6);
    border-bottom: 1px solid #6e6e6e;
}

.title-row {
    display: flex;
    align-items: center;
    height: 30px;
    position: relative;
}

.app-btn {
    position: absolute;
    left: 4px;
    top: 4px;
    width: 41px;
    height: 41px;
    background: linear-gradient(#e8e8e8, #bbb);
    border: 1px solid #222;
    z-index: 2;
}

.app-logo {
    width: 26px;
    height: 28px;
    margin-left: 5px;
}

.app-arrow {
    position: absolute;
    right: 2px;
    top: 17px;
    border: 4px solid transparent;
    border-top: 5px solid #333;
    border-bottom: 0;
}

.app-name {
    position: absolute;
    left: 0;
    right: 0;
    bottom: 2px;
    text-align: center;
    font-size: 9px;
}

.qa {
    width: 16px;
    height: 16px;
    flex-shrink: 0;
}

.qa-new { margin-left: 54px; }
.qa-open { margin-left: 8px; }
.qa-save { margin-left: 9px; }
.qa-undo { margin-left: 8px; width: 18px; height: 18px; }
.qa-redo { margin-left: 6px; width: 18px; height: 18px; }
.qa-proj { margin-left: 7px; width: 18px; height: 18px; }
.title-row > .tiny-arrow { margin-left: 4px; }

.workspace {
    margin-left: 2px;
    width: 130px;
    height: 21px;
    margin-top: 1px;
    border: 1px solid #666;
    background: linear-gradient(#f0f0f0, #d8d8d8);
    display: flex;
    align-items: center;
    justify-content: space-between;
    padding: 0 6px 0 5px;
    font-size: 11px;
}

.qa-more {
    width: 8px;
    height: 6px;
    margin-left: 4px;
    border-top: 1px solid #333;
    position: relative;
}

.qa-more::after {
    content: '';
    position: absolute;
    left: 0;
    top: 2px;
    border: 4px solid transparent;
    border-top: 4px solid #333;
    border-bottom: 0;
}

.app-title {
    margin-left: 344px;
    width: 790px;
    font-weight: bold;
    letter-spacing: .35px;
    color: #1c1c1c;
    white-space: nowrap;
}

.search-tri {
    border: 4px solid transparent;
    border-left: 4px solid #333;
    border-right: 0;
}

.search {
    margin-left: 5px;
    width: 180px;
    height: 21px;
    background: #fff;
    border: 1px solid #000;
    color: #777;
    font-style: italic;
    display: flex;
    align-items: center;
    padding-left: 3px;
    margin-top: -1px;
}

.info-icons {
    display: flex;
    gap: 7px;
    margin-left: 4px;
    padding-right: 9px;
    border-right: 1px solid #aaa;
}

.info-icons svg {
    width: 17px;
    height: 17px;
}

.help-icon {
    width: 17px;
    height: 17px;
    margin-left: 8px;
    margin-top: 1px;
}

.help-arrow {
    margin-left: 6px !important;
}

.win-btns {
    display: flex;
    align-items: center;
    margin-left: 24px;
    margin-top: 2px;
}

.w-min {
    width: 10px;
    height: 2px;
    background: #111;
    margin-top: 8px;
}

.w-max {
    width: 12px;
    height: 12px;
    margin-left: 6px;
    border: 1px solid #111;
    border-top-width: 2px;
    box-shadow: 2px -2px 0 -1px #111;
}

.w-close {
    margin-left: 5px;
    font-size: 14px;
    font-weight: bold;
}

.menu {
    display: flex;
    align-items: center;
    height: 18px;
    margin-left: 56px;
    gap: 20px;
    color: #222;
}

/* main toolbar */
.toolbar {
    height: 39px;
    display: grid;
    grid-template-columns: 14px 28px 34px 8px 28px 33px 32px 7.5px 70.5px 31px 32px 32px 32px 8px 30px 32px 34px 30px 68px 36px 4px 32px 32px 6px 32px 32px 31px 33px 8px 30px 119px 8px 28px 35px 6px 31px 7px 31px 32px 32px 7px 31px 7px 32px 32px 35px;
    align-items: center;
    justify-items: center;
    background: #d4d0c8;
    border-top: 1px solid #f4f4f4;
}

.tool svg {
    width: 24px;
    height: 24px;
}

.tool-left {
    justify-self: start;
}

.tool-on,
.tool-on-green {
    width: 32px;
    height: 31px;
    display: flex;
    align-items: center;
    justify-content: center;
    background: #f2c850;
    border: 1px solid;
    border-color: #fff #fff #c8c4bc #fff;
}

.tool-on-green {
    background: #b4f2b4;
}

.tool svg.big {
    width: 29px;
    height: 29px;
}

.grip {
    display: block;
    width: 4px;
    height: 32px;
    margin-left: 3px;
    border-left: 1px solid #fff;
    border-right: 1px solid #808080;
    background: #d4d0c8;
}

.sep {
    display: block;
    width: 2px;
    height: 20px;
    flex-shrink: 0;
    border-left: 1px solid #808080;
    border-right: 1px solid #fff;
}

.combo-tb {
    width: 68px;
    height: 20px;
    margin-bottom: 11px;
}

.combo-sel {
    width: 119px;
    height: 20px;
    margin-bottom: 11px;
}

.combo-hint {
    color: #808080;
    padding-left: 4px;
    letter-spacing: .2px;
}

/* centre work area */
.workspace-area {
    display: grid;
    grid-template-columns: 44px 1504px 1fr;
    height: 909px;
}

.left-strip {
    position: relative;
    background: linear-gradient(to right, #ccd0d8 0, #ccd0d8 4px, #9c9c9c 4px, #808080 34px, #5c5c5c 44px);
}

.strip-grip {
    margin-left: 5px;
    height: 9px;
    background: #d4d0c8;
    border-top: 1px solid #fff;
    border-bottom: 1px solid #808080;
    position: relative;
}

.strip-grip::after {
    content: '';
    position: absolute;
    left: 2px;
    right: 3px;
    top: 2px;
    height: 3px;
    border-top: 1px solid #808080;
    border-bottom: 1px solid #fff;
}

.strip-play {
    position: absolute;
    left: 13px;
    top: 832px;
    width: 20px;
    height: 20px;
    background: #c8c8c8;
    border: 1px solid #555;
    border-radius: 3px;
}

.strip-play span {
    position: absolute;
    left: 6px;
    top: 4px;
    border: 5px solid transparent;
    border-left: 6px solid #000;
    border-right: 0;
}

.layout-btn {
    position: absolute;
    left: 9px;
    top: 864px;
    width: 35px;
    height: 45px;
    padding: 7px 1px 7px 3px;
    display: grid;
    grid-template-columns: 1fr 1fr;
    gap: 1px;
    background: #b6d6e8;
    border-radius: 5px 0 0 5px;
}

.layout-btn i {
    background: #8e8e8e;
    border: 1px solid #666;
    border-radius: 2px;
}

.center {
    display: flex;
    flex-direction: column;
}

.viewports {
    height: 864px;
    display: grid;
    grid-template-columns: 751px 750px;
    grid-template-rows: 430px 430px;
    column-gap: 3px;
    row-gap: 4px;
    background: #d4d0c8;
}

.vp {
    position: relative;
    background: #7c7c7c;
    border: 2px solid #3c4654;
    overflow: hidden;
}

.vp-active {
    border: 3px solid #f6ee1c;
    background: #808080;
}

.vp-svg {
    fill: none;
    shape-rendering: crispEdges;
}

.vp-active .vp-svg {
    shape-rendering: auto;
}

.vp-label {
    position: absolute;
    left: 3px;
    top: 6px;
    color: #c6c6c6;
    letter-spacing: .8px;
    word-spacing: 1px;
}

.vp-bracket {
    position: absolute;
    left: 3px;
    top: 6px;
    width: 4px;
    height: 10px;
    border: 1px solid #c6c6c6;
    border-right: 0;
    z-index: 1;
}

.minor { stroke: #727272; }
.major { stroke: #000; }
.wall { stroke: #fff; }
.red { stroke: #c81c1c; }
.grey-l { stroke: #5c5c5c; }
.green-l { stroke: #0e8a0e; }
.blue-l { stroke: #1010b8; }
.minor-p { stroke: #6a6a6a; fill: none; }
.black-p { stroke: #000; fill: none; }
.wall-p { stroke: #fff; fill: none; }
.face-light { fill: #239465; }
.face-dark { fill: #175c40; }
.face-rim { fill: #4cc59a; }

.vp-svg text {
    font-family: 'Liberation Sans', Arial, sans-serif;
    font-size: 11px;
    stroke: none;
}

.ax-red { fill: #c81c1c; }
.ax-grey { fill: #5c5c5c; }
.ax-green { fill: #0e8a0e; }
.ax-blue { fill: #1010c8; }

/* time slider and track bar */
.time-slider {
    height: 20px;
    background: #bdbdbd;
    display: flex;
    align-items: flex-start;
    padding-top: 1px;
}

.ts-arrow {
    width: 16px;
    height: 17px;
    display: flex;
    align-items: center;
    justify-content: center;
    background: #d4d0c8;
    border: 1px solid;
    border-color: #fff #808080 #808080 #fff;
}

.ts-next {
    margin-left: 2px;
}

.ts-thumb {
    width: 124px;
    height: 17px;
    display: flex;
    align-items: center;
    justify-content: center;
    background: #d4d0c8;
    border: 1px solid;
    border-color: #fff #303030 #303030 #fff;
}

.track {
    position: relative;
    height: 25px;
    background:
        repeating-linear-gradient(to right, #777 0, #777 1px, transparent 1px, transparent 13.92px) 55.5px 1px / 100% 11px no-repeat,
        #c2c2c2;
    border-top: 1px solid #fff;
    border-bottom: 1px solid #fff;
}

.track-icon {
    position: absolute;
    left: 13px;
    top: 3px;
    width: 17px;
    height: 17px;
}

.frame-marker {
    position: absolute;
    left: 52px;
    top: 0;
    width: 8px;
    height: 23px;
    background: #7fa6c6;
    border: 1px solid #5c84a4;
}

.track-labels {
    position: absolute;
    left: 20.700px;
    top: 12px;
    display: flex;
}

.track-labels span {
    width: 69.600px;
    text-align: center;
}

/* command panel */
.cmd {
    display: flex;
    flex-direction: column;
    border-bottom: 1px solid #808080;
    margin-right: 5px;
    position: relative;
}

.cmd::after {
    content: '';
    position: absolute;
    right: -5px;
    top: 45px;
    bottom: -1px;
    width: 5px;
    background: #ccd0d8;
}

.cmd-tabs {
    height: 28px;
    display: flex;
    align-items: flex-end;
    padding: 0 0 0 2px;
    gap: 1px;
    border-bottom: 1px solid #808080;
}

.cmd-tab {
    width: 28px;
    height: 24px;
    display: flex;
    justify-content: center;
    padding-top: 2px;
    background: #fff;
    border: 1px solid #aaa;
    border-bottom: 0;
    border-radius: 4px 4px 0 0;
}

.cmd-tab-on {
    background: #dcd9d2;
}

.cmd-tab svg {
    width: 20px;
    height: 20px;
}

.cmd-body {
    flex: 1;
    display: flex;
}

.cmd-main {
    width: 178px;
    display: flex;
    flex-direction: column;
}

.sub-icons {
    display: grid;
    grid-template-columns: 29px 21px 24px 24px 24px 23px 24px;
    align-items: center;
    justify-items: center;
    height: 23px;
    margin: 7px 0 0 8px;
}

.sub-icons svg {
    width: 18px;
    height: 18px;
}

.sub-icons .sub-on {
    width: 24px;
    height: 23px;
    background: #f2c850;
    border: 1px solid #fff;
    display: flex;
    align-items: center;
    justify-content: center;
}

.sub-ball {
    width: 19px;
    height: 19px;
    border-radius: 50%;
    background: radial-gradient(circle at 35% 35%, #fff, #d0d0d0 60%, #777);
    border: 1px solid #444;
}

.combo-cat {
    width: 162px;
    height: 19px;
    margin: 7px 0 0 12px;
}

.rollouts {
    flex: 1;
    margin: 8px 0 5px 4px;
    border: 1px solid;
    border-color: #808080 #fff #fff #808080;
    padding: 4px 4px 0;
}

.rollout {
    margin-bottom: 6px;
}

.roll-head {
    position: relative;
    height: 17px;
    margin: 0 3px;
    display: flex;
    align-items: center;
    justify-content: center;
    border: 1px solid;
    border-color: #fff #808080 #808080 #fff;
    background: #d4d0c8;
    z-index: 1;
}

.roll-minus {
    position: absolute;
    left: 5px;
    top: 2px;
}

.roll-body {
    margin-top: -8px;
    border: 1px solid;
    border-color: #808080 #fff #fff #808080;
    box-shadow: inset 1px 1px 0 #fff;
    padding: 8px 8px 4px;
}

.autogrid {
    display: flex;
    align-items: center;
    height: 13px;
    margin: 2px 0 3px 26px;
    gap: 10px;
}

.check-off {
    background: transparent;
}

.disabled {
    color: #808080;
    text-shadow: 1px 1px 0 #fff;
}

.btn-grid {
    display: grid;
    grid-template-columns: 69px 69px;
    grid-auto-rows: 18px;
    column-gap: 9px;
    row-gap: 3px;
}

.name-row {
    display: flex;
    gap: 4px;
    padding: 14px 4px 7px 7px;
}

.name-field {
    width: 130px;
    height: 19px;
}

.swatch {
    width: 17px;
    height: 19px;
    background: #2cbf82;
    border: 1px solid #fff;
}

.cmd-extra {
    width: 175px;
    margin: 1px 0 5px 9px;
    border: 1px solid;
    border-color: #808080 #fff #fff #808080;
}

/* status area */
.status {
    height: 51px;
    display: flex;
    padding-top: 5px;
}

.script-col {
    width: 43px;
    padding: 0 9px 0 6px;
    display: flex;
    flex-direction: column;
    gap: 2px;
    border-right: 1px solid #fff;
    margin-top: -1px;
}

.script-pink {
    height: 21px;
    background: #dcc8c8;
    border: 1px solid;
    border-color: #808080 #fff #fff #808080;
}

.script-box {
    height: 21px;
    display: flex;
    align-items: center;
    padding-left: 2px;
    background: #fff;
    border: 1px solid;
    border-color: #808080 #fff #fff #808080;
    font-family: 'Liberation Mono', monospace;
    font-size: 11px;
}

.status-rows {
    width: 1430px;
    display: flex;
    flex-direction: column;
    gap: 4px;
}

.st-row {
    display: flex;
    align-items: stretch;
    height: 21px;
}

.st-wide {
    width: 1000px;
    padding-left: 5px;
}

.st-ic {
    display: flex;
    align-items: center;
    justify-content: center;
}

.st-pin { width: 28px; }
.st-pin svg { width: 11px; height: 17px; }
.st-lock { width: 24px; }
.st-lock svg { width: 12px; height: 14px; }
.st-cross { width: 27px; }
.st-cross svg { width: 15px; height: 15px; }

.st-lbl {
    width: 26px;
    padding-right: 1px;
    display: flex;
    align-items: center;
    justify-content: flex-end;
}

.st-lbl-x {
    width: 16px;
}

.st-in {
    width: 56px;
}

.st-grid,
.st-tag {
    width: 100px;
    padding-left: 5px;
}

.st-grid {
    margin-left: 15px;
}

.st-prompt {
    width: 1302px;
    padding-left: 5px;
}

.st-cube {
    width: 23px;
    margin: 0 2px 0 3px;
    display: flex;
    align-items: center;
    justify-content: center;
    background: #f2c850;
    border: 1px solid #fff;
}

.st-cube svg {
    width: 15px;
    height: 15px;
}

.key-btn {
    width: 42px;
    height: 44px;
    margin: -1px 0 0 4px;
    display: flex;
    align-items: center;
    justify-content: center;
    border: 1px solid;
    border-color: #fff #808080 #808080 #fff;
}

.key-btn svg {
    width: 26px;
    height: 12px;
}

.key-col {
    width: 48px;
    margin: -1px 0 0 4px;
    height: 44px;
    display: grid;
    grid-auto-rows: 22px;
}

.key-txt {
    white-space: nowrap;
}

.sel-col {
    width: 114px;
    margin: 0 0 0 4px;
    display: flex;
    flex-direction: column;
    gap: 3px;
}

.combo-key {
    height: 20px;
    width: 113px;
}

.filter-row {
    display: flex;
    align-items: center;
    height: 21px;
}

.curve-ic {
    width: 17px;
    height: 17px;
    margin: 0 8px 0 1px;
}

.filter-btn {
    width: 89px;
    height: 21px;
}

.playback {
    margin-left: 9px;
    width: 214px;
    display: flex;
    flex-direction: column;
    gap: 4px;
}

.pb-row {
    display: grid;
    grid-template-columns: 26px 26px 20px 26px 26px 24px 22px 22px 22px;
    align-items: center;
    height: 18px;
}

.pb-row svg {
    width: 16px;
    height: 15px;
    flex-shrink: 0;
}

.pb-row .pb-play {
    width: 14px;
    height: 13px;
}

.pb-row2 {
    display: flex;
    height: 21px;
    gap: 0;
}

.pb-row2 .pb-keymode {
    width: 16px;
    height: 12px;
    margin-right: 0;
}

.sep-pb {
    margin: 0 2px 0 4px;
}

.pb-frame {
    width: 62px;
    height: 20px;
    margin-right: 2px;
    flex-shrink: 0;
}

.pb-row2 .spinner {
    height: 20px;
    width: 11px;
    flex-shrink: 0;
}

.pb-row2 svg {
    margin-right: 6px;
}

.pb-row2 .pb-tc {
    margin-left: 5px;
}

.band {
    height: 6px;
    background: #bfbfbf;
    border-bottom: 1px solid #fff;
}

/* windows taskbar */
.taskbar {
    height: 26px;
    display: flex;
    align-items: center;
    background: #d4d0c8;
    position: relative;
}

.start {
    width: 53px;
    height: 22px;
    display: flex;
    align-items: center;
    gap: 3px;
    padding-left: 3px;
    font-weight: bold;
    letter-spacing: .1px;
    border: 1px solid;
    border-color: #fff #404040 #404040 #fff;
}

.start svg {
    width: 16px;
    height: 16px;
}

.task {
    height: 22px;
    width: 160px;
    display: flex;
    align-items: center;
    gap: 4px;
    padding-left: 3px;
    white-space: nowrap;
    overflow: hidden;
    border: 1px solid;
    border-color: #fff #404040 #404040 #fff;
}

.task svg {
    width: 16px;
    height: 16px;
    flex-shrink: 0;
}

.task-drive {
    margin-left: 9px;
    gap: 4px;
    padding-left: 4px;
}

.ie {
    width: 18px;
    height: 18px;
    margin: 0 8px 0 10px;
}

.task-on {
    width: 159px;
    background: #fbfaf8;
    font-weight: bold;
    letter-spacing: .45px;
    border-color: #404040 #fff #fff #404040;
}

.task-word {
    margin-left: 3px;
    letter-spacing: 0;
}

.lang {
    margin-left: auto;
    padding-right: 3px;
    border-right: 1px solid #808080;
    height: 20px;
    display: flex;
    align-items: center;
    font-size: 12px;
}

.tray {
    width: 130px;
    height: 22px;
    margin: 0 2px 0 3px;
    display: flex;
    align-items: center;
    border: 1px solid;
    border-color: #808080 #fff #fff #808080;
    padding-left: 5px;
    gap: 9px;
}

.tray svg {
    width: 16px;
    height: 16px;
    flex-shrink: 0;
}

.tray-chev {
    font-weight: bold;
    width: 8px;
}

.clock {
    margin-left: 4px;
}

/* Grid and Snap dialog floats over the viewports */
.dialog {
    position: absolute;
    left: 807px;
    top: 391px;
    width: 305px;
    height: 268px;
    padding: 2px;
    background: #d4d0c8;
    border: 1px solid;
    border-color: #fff #404040 #404040 #fff;
    box-shadow: 0 0 0 1px #888;
}

.dlg-title {
    height: 18px;
    display: flex;
    align-items: center;
    padding: 0 2px;
    background: linear-gradient(to right, #0a246a, #a6caf0);
    color: #fff;
    font-weight: bold;
    letter-spacing: .15px;
}

.dlg-title svg {
    width: 16px;
    height: 16px;
    background: #1a5a6a;
}

.dlg-name {
    flex: 1;
    margin-left: 3px;
}

.dlg-btn {
    position: relative;
    width: 15px;
    height: 14px;
    background: #d4d0c8;
    color: #000;
    border: 1px solid;
    border-color: #fff #404040 #404040 #fff;
    font-size: 10px;
    display: flex;
    align-items: center;
    justify-content: center;
}

.dlg-max {
    margin: 0 2px 0 1px;
}

.dlg-min::after {
    content: '';
    position: absolute;
    left: 3px;
    bottom: 2px;
    width: 6px;
    height: 2px;
    background: #000;
}

.dlg-max::after {
    content: '';
    position: absolute;
    left: 2px;
    top: 1px;
    width: 9px;
    height: 9px;
    border: 1px solid #808080;
    border-top-width: 2px;
}

.dlg-tabs {
    display: flex;
    align-items: flex-end;
    height: 25px;
    padding-left: 2px;
    gap: 2px;
    border-bottom: 1px solid #808080;
}

.dlg-tab {
    height: 20px;
    display: flex;
    align-items: center;
    justify-content: center;
    background: #fff;
    border: 1px solid;
    border-color: #aaa #888 #fff #ccc;
    border-radius: 3px 3px 0 0;
}

.dlg-snaps { width: 53px; }
.dlg-opts { width: 60px; }
.dlg-user { width: 80px; }

.dlg-tab-on {
    width: 79px;
    height: 22px;
    background: #d4d0c8;
    border-color: #fff #808080 #d4d0c8 #fff;
    margin-bottom: -1px;
}

.dlg-body {
    padding: 10px 0 0 32px;
}

.group {
    position: relative;
    width: 236px;
    border: 1px solid #808080;
}

.legend {
    position: absolute;
    left: 7px;
    top: -6px;
    padding: 0 1px;
    background: #d4d0c8;
}

.group-grid {
    height: 69px;
    padding-top: 6px;
    margin-bottom: 9px;
}

.grid-row {
    display: grid;
    grid-template-columns: 157px 49px 10px;
    column-gap: 2px;
    align-items: center;
    height: 16px;
    margin-bottom: 3.500px;
    text-align: right;
    white-space: nowrap;
}

.dlg-in {
    height: 16px;
    text-align: left;
    padding-left: 2px;
}

.grid-row .spinner {
    width: 11px;
    height: 16px;
    margin-left: 3px;
}

.chk-row {
    display: flex;
    align-items: center;
    gap: 5px;
    height: 12px;
    margin-bottom: 8px;
}

.group-dyn {
    height: 43px;
    margin-top: 11px;
}

.radio-row {
    display: flex;
    align-items: center;
    height: 100%;
    padding: 7px 0 0 12px;
}

.radio {
    width: 11px;
    height: 11px;
    border-radius: 50%;
    background: #fff;
    border: 1px solid #808080;
    position: relative;
    flex-shrink: 0;
}

.radio-on::after {
    content: '';
    position: absolute;
    left: 2px;
    top: 2px;
    width: 5px;
    height: 5px;
    border-radius: 50%;
    background: #000;
}

.radio-txt {
    margin-left: 6px;
    width: 95px;
    white-space: nowrap;
}
```
